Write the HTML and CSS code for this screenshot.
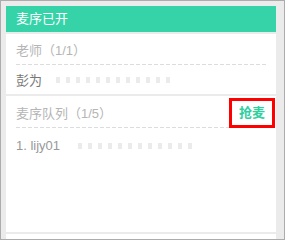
FILE: index.html
```html
<!DOCTYPE html>
<html lang="zh-CN">
<head>
    <meta charset="UTF-8">
    <title>麦序</title>
    <link rel="stylesheet" href="styles.css">
</head>
<body>
    <div class="mic-box">
        <header class="mic-head">麦序已开</header>

        <!-- 老师 -->
        <section class="panel">
            <div class="row row-title">老师（1/1）</div>
            <div class="row row-user">彭为<span class="mask mask-a"></span></div>
        </section>

        <!-- 麦序队列 -->
        <section class="panel panel-queue">
            <div class="row row-title row-queue">
                <span>麦序队列（1/5）</span>
                <a href="#" class="grab-btn">抢麦</a>
            </div>
            <div class="row row-item">1. lijy01<span class="mask mask-b"></span></div>
        </section>

        <section class="panel"></section>
    </div>
</body>
</html>
```

FILE: styles.css
```css
/* --- 基本 --- */
:root {
    --green: #36d3a8;
    --bg-gray: #ebebeb;
    --dash: #dcdcdc;
}

body {
    margin: 0;
    font-family: "Liberation Sans", "Noto Sans CJK SC", sans-serif;
    font-size: 13px;
}

.mic-box {
    box-sizing: border-box;
    width: 285px;
    height: 240px;
    padding: 5px 8px 0 5px;
    border: 1px solid #acacac;
    background-color: var(--bg-gray);
    overflow: hidden;
}

/* --- ヘッダー --- */
.mic-head {
    height: 26px;
    line-height: 26px;
    padding-left: 10px;
    background-color: var(--green);
    color: #fff;
}

/* --- パネル --- */
.panel {
    margin-top: 2px;
    padding: 0 10px;
    background-color: #fff;
    min-height: 20px;
}

.panel-queue {
    height: 136px;
    box-sizing: border-box;
}

.row {
    display: flex;
    align-items: center;
}

.row-title {
    height: 31px;
    color: #b5b5b5;
    background: repeating-linear-gradient(to right, var(--dash) 0 4px, transparent 4px 6px) bottom / 100% 1px no-repeat;
}

.row-user {
    height: 29px;
    color: #777;
}

.row-queue {
    height: 32px;
    justify-content: space-between;
}

.row-item {
    padding-top: 8px;
    line-height: 20px;
    color: #999;
}

/* 抢麦ボタン（赤枠付き） */
.grab-btn {
    align-self: flex-end;
    box-sizing: border-box;
    width: 46px;
    height: 30px;
    margin-right: -9px;
    border: 3px solid #f00;
    background-color: #fff;
    color: #2fcf9f;
    font-weight: bold;
    text-decoration: none;
    text-align: center;
    line-height: 24px;
}

/* 名前のマスク */
.mask {
    display: inline-block;
    width: 114px;
    height: 6px;
    background: repeating-linear-gradient(to right, var(--bg-gray) 0 4px, transparent 4px 10px);
}

.mask-a {
    margin-left: 14px;
}

.mask-b {
    margin-left: 18px;
}
```
